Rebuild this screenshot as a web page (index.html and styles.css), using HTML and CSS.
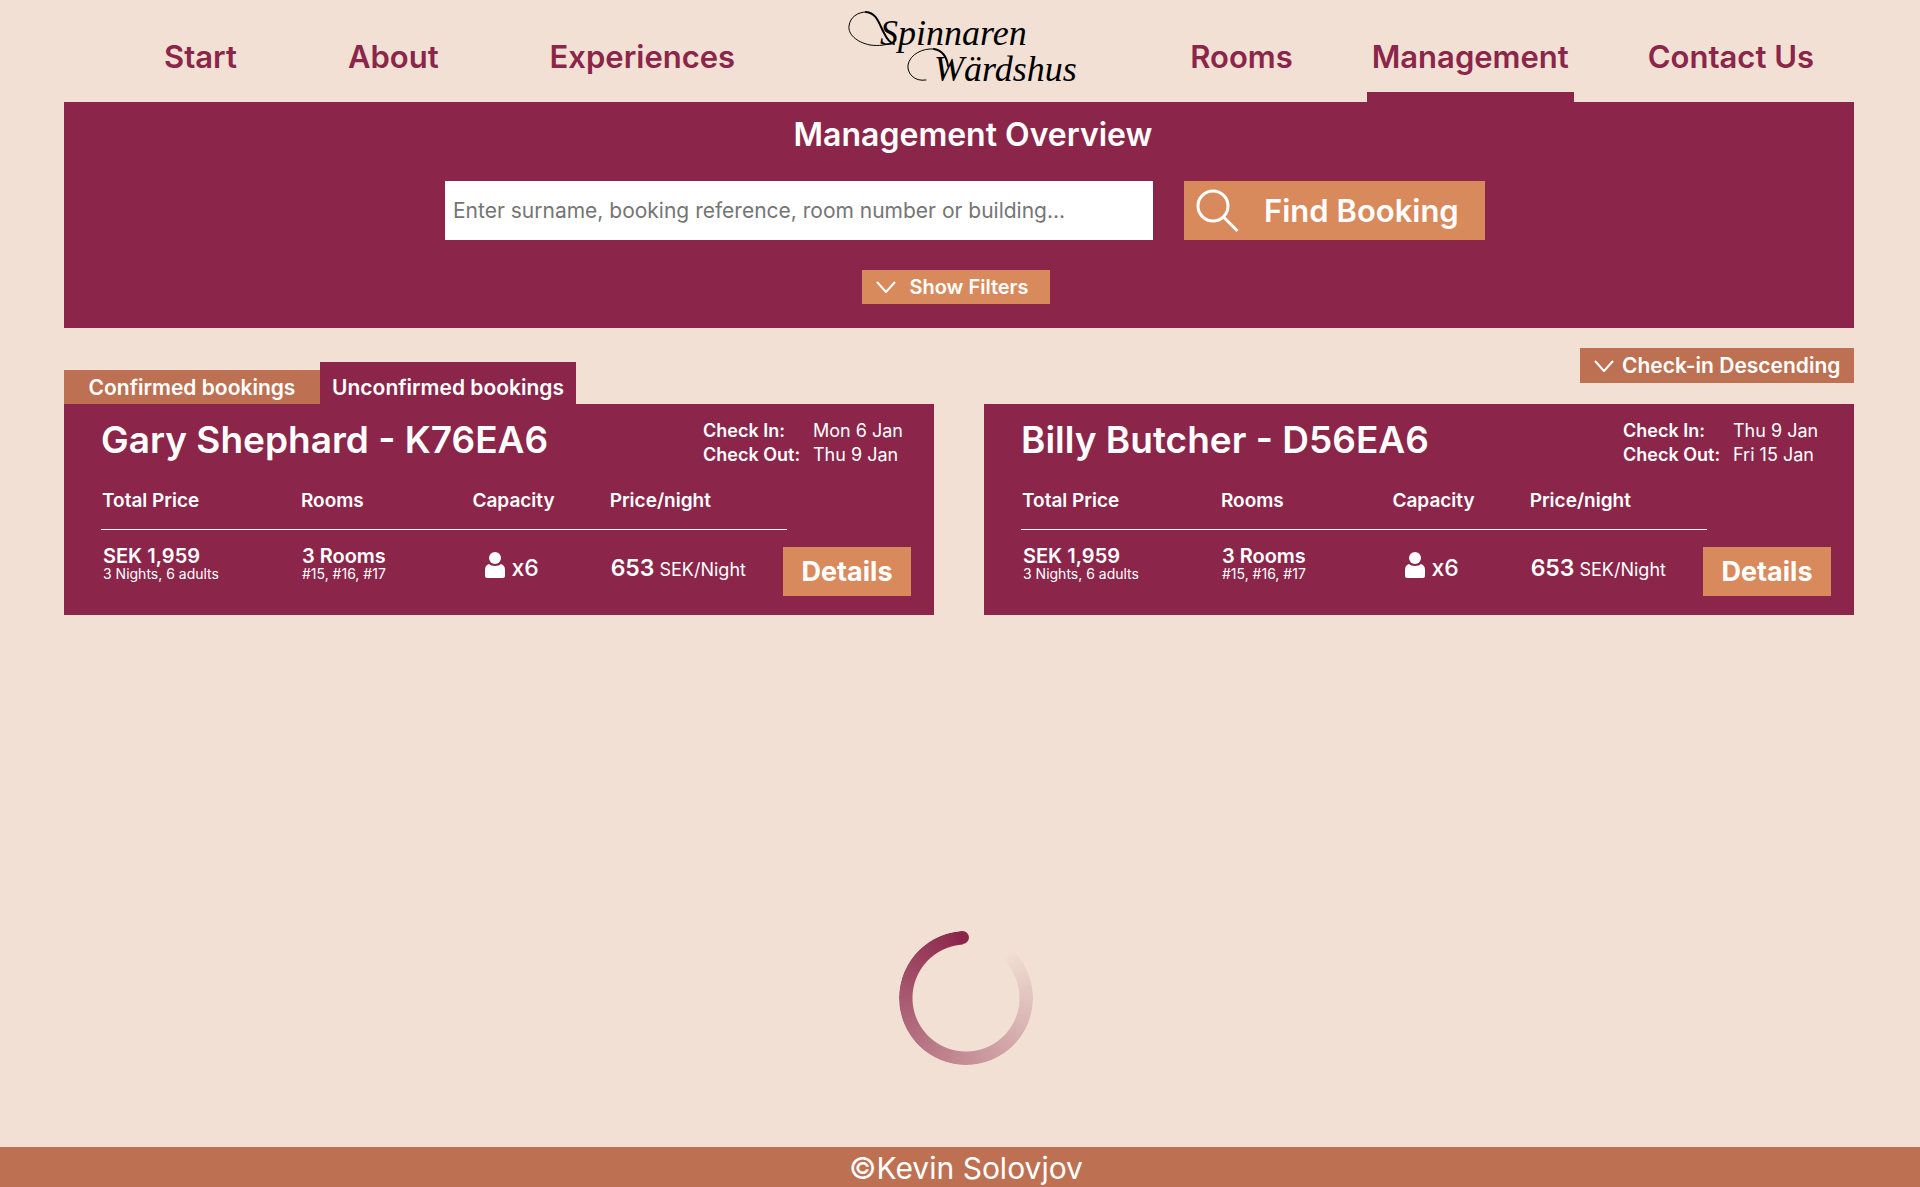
FILE: index.html
```html
<!DOCTYPE html>
<html lang="en">
<head>
<meta charset="utf-8">
<meta name="viewport" content="width=device-width, initial-scale=1">
<title>Management – Spinnaren Wärdshus</title>
<link rel="stylesheet" href="styles.css">
</head>
<body>
<header class="site-header">
  <nav class="nav nav-left" aria-label="Main">
    <a class="nav-link" href="#start">Start</a>
    <a class="nav-link" href="#about">About</a>
    <a class="nav-link" href="#experiences">Experiences</a>
  </nav>
  <a class="logo" href="#start" aria-label="Spinnaren Wärdshus">
    <svg width="230" height="92" viewBox="0 0 230 92">
      <g fill="none" stroke="#000" stroke-linecap="round">
        <path stroke-width="1" d="M48 40C40 46 30 46 22 45C8 42 0 34 1 26C2 17 10 12 18 12"/>
        <path stroke-width="2" d="M18 12C29 13 31 24 36 33C39 39 42 43 46 44"/>
        <path stroke-width="1" d="M78 80C66 82 59 73 60 65C62 54 75 48 86 49"/>
        <path stroke-width="2" d="M86 49C96 51 99 58 100 66"/>
      </g>
      <text class="logo-text" x="32" y="45">Spinnaren</text>
      <text class="logo-text" x="86" y="81">Wärdshus</text>
    </svg>
  </a>
  <nav class="nav nav-right" aria-label="More">
    <a class="nav-link" href="#rooms">Rooms</a>
    <a class="nav-link active" href="#management" aria-current="page">Management</a>
    <a class="nav-link" href="#contact">Contact Us</a>
  </nav>
</header>

<main class="content">
  <section class="overview">
    <h1 class="overview-title">Management Overview</h1>
    <form class="search">
      <input class="search-input" type="text" aria-label="Search bookings" placeholder="Enter surname, booking reference, room number or building...">
      <button class="search-button" type="submit">
        <svg width="44" height="44" viewBox="0 0 44 44" fill="none" stroke="#fff" stroke-width="3"><circle cx="17" cy="17" r="15"/><path d="M27.500 28L41.500 42"/></svg>
        <span class="search-label">Find Booking</span>
      </button>
    </form>
    <button class="filters" type="button">
      <svg width="20" height="12" viewBox="0 0 20 12" fill="none" stroke="#fff" stroke-width="2"><path d="M1 1L10 11L19 1"/></svg>
      Show Filters
    </button>
  </section>

  <div class="toolbar">
    <div class="tabs" role="tablist">
      <button class="tab" type="button" role="tab" aria-selected="false">Confirmed bookings</button>
      <button class="tab tab-active" type="button" role="tab" aria-selected="true">Unconfirmed bookings</button>
    </div>
    <label class="sort">
      <svg width="20" height="12" viewBox="0 0 20 12" fill="none" stroke="#fff" stroke-width="2"><path d="M1 1L10 11L19 1"/></svg>
      <select class="sort-select" aria-label="Sort bookings">
        <option>Check-in Descending</option>
      </select>
    </label>
  </div>

  <div class="bookings">
    <article class="card">
      <div class="card-top">
        <h2 class="card-title">Gary Shephard - K76EA6</h2>
        <dl class="dates">
          <dt>Check In:</dt><dd>Mon 6 Jan</dd>
          <dt>Check Out:</dt><dd>Thu 9 Jan</dd>
        </dl>
      </div>
      <div class="card-body">
        <table class="facts">
          <thead><tr><th class="col-total">Total Price</th><th class="col-rooms">Rooms</th><th class="col-capacity">Capacity</th><th>Price/night</th></tr></thead>
          <tbody><tr>
            <td><strong class="value">SEK 1,959</strong><span class="note">3 Nights, 6 adults</span></td>
            <td><strong class="value">3 Rooms</strong><span class="note">#15, #16, #17</span></td>
            <td><div class="capacity"><svg width="20" height="26" viewBox="0 0 20 26" fill="#fff"><circle cx="10" cy="6" r="6"/><path d="M4 12C6 14.500 14 14.500 16 12C19 13 20 15 20 18V24Q20 26 18 26H2Q0 26 0 24V18C0 15 1 13 4 12Z"/></svg>x6</div></td>
            <td><div class="rate"><strong class="amount">653</strong> SEK/Night</div></td>
          </tr></tbody>
        </table>
        <button class="details" type="button">Details</button>
      </div>
    </article>

    <article class="card">
      <div class="card-top">
        <h2 class="card-title">Billy Butcher - D56EA6</h2>
        <dl class="dates">
          <dt>Check In:</dt><dd>Thu 9 Jan</dd>
          <dt>Check Out:</dt><dd>Fri 15 Jan</dd>
        </dl>
      </div>
      <div class="card-body">
        <table class="facts">
          <thead><tr><th class="col-total">Total Price</th><th class="col-rooms">Rooms</th><th class="col-capacity">Capacity</th><th>Price/night</th></tr></thead>
          <tbody><tr>
            <td><strong class="value">SEK 1,959</strong><span class="note">3 Nights, 6 adults</span></td>
            <td><strong class="value">3 Rooms</strong><span class="note">#15, #16, #17</span></td>
            <td><div class="capacity"><svg width="20" height="26" viewBox="0 0 20 26" fill="#fff"><circle cx="10" cy="6" r="6"/><path d="M4 12C6 14.500 14 14.500 16 12C19 13 20 15 20 18V24Q20 26 18 26H2Q0 26 0 24V18C0 15 1 13 4 12Z"/></svg>x6</div></td>
            <td><div class="rate"><strong class="amount">653</strong> SEK/Night</div></td>
          </tr></tbody>
        </table>
        <button class="details" type="button">Details</button>
      </div>
    </article>
  </div>
</main>

<div class="loading" role="status" aria-label="Loading"><div class="spinner"></div></div>
<footer class="site-footer">©Kevin Solovjov</footer>
</body>
</html>
```
FILE: styles.css
```css
:root {
  --sand: #f2e0d4;
  --wine: #8b264a;
  --clay: #be7152;
  --orange: #d98a5c;
}

* { box-sizing: border-box; }

body {
  margin: 0;
  min-height: 100vh;
  display: flex;
  flex-direction: column;
  background: var(--sand);
  color: #fff;
  font-family: Inter, "Open Sans", sans-serif;
}

button, input, select {
  font-family: inherit;
  color: inherit;
  border: 0;
  border-radius: 0;
}

svg { display: block; flex: none; }

/* Header */
.site-header {
  display: flex;
  justify-content: space-between;
  padding: 0 106px 0 164px;
}

.nav { display: flex; }
.nav-left { gap: 111px; }
.nav-right { gap: 74px; }

.nav-link {
  padding-top: 22px;
  border-bottom: 10px solid transparent;
  color: var(--wine);
  font-size: 31px;
  font-weight: 600;
  line-height: 70px;
  text-decoration: none;
  white-space: nowrap;
}

.nav-link.active {
  padding-right: 5px;
  padding-left: 5px;
  border-bottom-color: var(--wine);
}

.logo { height: 92px; }
.logo svg { overflow: visible; }

.logo-text {
  font-family: "Liberation Serif", serif;
  font-size: 36px;
  font-style: italic;
}

/* Search panel */
.content { padding: 0 66px 0 64px; }

.overview {
  display: flex;
  flex-direction: column;
  align-items: center;
  padding: 13px 0 24px;
  background: var(--wine);
}

.overview-title {
  margin: 0 0 26px;
  padding-left: 28px;
  font-size: 32px;
  font-weight: 600;
  line-height: 40px;
}

.search {
  display: flex;
  gap: 31px;
  margin-bottom: 30px;
  padding-left: 12px;
}

.search-input {
  width: 708px;
  padding: 0 8px;
  background: #fff;
  color: #222;
  font-size: 21px;
}

.search-input::placeholder { color: #757575; opacity: 1; }

.search-button {
  display: flex;
  align-items: center;
  width: 301px;
  height: 59px;
  padding: 0 12px;
  background: var(--orange);
  font-size: 31px;
  font-weight: 600;
}

.search-label { margin-left: 24px; }

.filters {
  display: flex;
  align-items: center;
  gap: 13px;
  height: 34px;
  margin-right: 6px;
  padding: 0 21px 0 14px;
  background: var(--orange);
  font-size: 20px;
  font-weight: 600;
}

/* Tabs and sorting */
.toolbar {
  display: flex;
  justify-content: space-between;
  padding-top: 20px;
}

.tabs { display: flex; align-items: flex-end; }

.tab {
  width: 256px;
  height: 34px;
  padding: 0;
  background: var(--clay);
  font-size: 21px;
  font-weight: 600;
  white-space: nowrap;
}

.tab-active {
  height: 42px;
  padding-top: 8px;
  background: var(--wine);
}

.sort {
  display: flex;
  align-items: center;
  gap: 8px;
  height: 35px;
  margin-bottom: 21px;
  padding: 0 13px 0 14px;
  background: var(--clay);
}

.sort-select {
  appearance: none;
  padding: 0;
  background: transparent;
  font-size: 21px;
  font-weight: 600;
}

.sort-select option { color: #222; }

/* Booking cards */
.bookings {
  display: grid;
  grid-template-columns: 1fr 1fr;
  gap: 50px;
}

.card {
  padding: 15px 23px 19px 37px;
  background: var(--wine);
}

.card-top { display: flex; justify-content: space-between; }

.card-title {
  margin: 0;
  font-size: 37px;
  font-weight: 600;
  line-height: 42px;
}

.dates {
  display: grid;
  grid-template-columns: 110px 98px;
  margin: 0;
  font-size: 18px;
  line-height: 24px;
  white-space: nowrap;
}

.dates dt { font-weight: 600; }
.dates dd { margin: 0; }

.card-body { display: flex; align-items: flex-end; }

.facts {
  flex: 1;
  table-layout: fixed;
  border-collapse: separate;
  border-spacing: 0;
  white-space: nowrap;
}

.facts th {
  padding: 22px 0 16px 1px;
  border-bottom: 1px solid #fff;
  font-size: 19px;
  font-weight: 600;
  line-height: 24px;
  text-align: left;
}

.col-total { width: 29%; }
.col-rooms { width: 25%; }
.col-capacity { width: 20%; }

.facts td { padding: 17px 0 5px 2px; vertical-align: top; }

.value, .note { display: block; }
.value { font-size: 20px; font-weight: 600; line-height: 18px; }
.note { font-size: 14px; line-height: 17px; }

.capacity {
  display: flex;
  align-items: center;
  gap: 6px;
  padding-left: 12px;
  font-size: 23px;
  font-weight: 500;
  line-height: 42px;
}

.capacity svg { margin-bottom: 6px; }
.rate { font-size: 18px; line-height: 42px; }
.amount { font-size: 23px; font-weight: 600; }

.details {
  width: 128px;
  height: 49px;
  margin-left: -4px;
  padding: 0;
  background: var(--orange);
  font-size: 27px;
  font-weight: 700;
}

/* Loading indicator */
.loading {
  display: flex;
  justify-content: center;
  margin-top: auto;
  padding: 40px 0 82px 12px;
}

.spinner {
  position: relative;
  width: 134px;
  height: 134px;
}

.spinner::before {
  content: "";
  position: absolute;
  inset: 0;
  border-radius: 50%;
  background: conic-gradient(#8b264a00 42deg, #8b264a 356deg, #8b264a00 357deg);
  -webkit-mask: radial-gradient(circle, transparent 53px, #000 54px);
  mask: radial-gradient(circle, transparent 53px, #000 54px);
}

.spinner::after {
  content: "";
  position: absolute;
  top: 0;
  left: 57px;
  width: 13px;
  height: 13px;
  border-radius: 50%;
  background: var(--wine);
}

.site-footer {
  padding: 2px 0 0 12px;
  background: var(--clay);
  font-size: 30px;
  line-height: 38px;
  text-align: center;
}
```
